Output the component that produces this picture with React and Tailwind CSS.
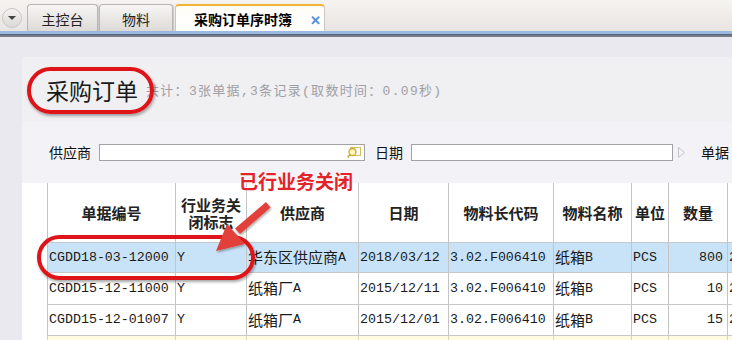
import React from "react";

const CJK = /[\u3000-\u9fff\uff00-\uffef]/;

function Mixed({ text }) {
  const parts = [];
  let cur = "";
  let curCjk = null;
  for (const ch of text) {
    const c = CJK.test(ch);
    if (curCjk === null || c === curCjk) {
      cur += ch;
      curCjk = c;
    } else {
      parts.push([cur, curCjk]);
      cur = ch;
      curCjk = c;
    }
  }
  if (cur) parts.push([cur, curCjk]);
  return (
    <>
      {parts.map(([t, c], i) =>
        c ? (
          <span key={i} className="text-[15px] font-['Noto_Sans_CJK_SC',sans-serif]">
            {t}
          </span>
        ) : (
          <span key={i} className="text-[13.3px] font-['Liberation_Mono',monospace]">
            {t}
          </span>
        )
      )}
    </>
  );
}

const cols = [
  { w: "w-[128px]", h: "单据编号" },
  { w: "w-[71px]", h: "行业务关闭标志" },
  { w: "w-[112px]", h: "供应商" },
  { w: "w-[90px]", h: "日期" },
  { w: "w-[105px]", h: "物料长代码" },
  { w: "w-[78px]", h: "物料名称" },
  { w: "w-[37px]", h: "单位" },
  { w: "w-[59px]", h: "数量" },
  { w: "w-[40px]", h: "" },
];

const rows = [
  { h: "h-[30px]", bg: "bg-[#c8e3f8]", d: ["CGDD18-03-12000", "Y", "华东区供应商A", "2018/03/12", "3.02.F006410", "纸箱B", "PCS", "800", "2"] },
  { h: "h-[32px]", bg: "bg-white", d: ["CGDD15-12-11000", "Y", "纸箱厂A", "2015/12/11", "3.02.F006410", "纸箱B", "PCS", "10", "2"] },
  { h: "h-[31px]", bg: "bg-white", d: ["CGDD15-12-01007", "Y", "纸箱厂A", "2015/12/01", "3.02.F006410", "纸箱B", "PCS", "15", "2"] },
];

function Tab({ w, children }) {
  return (
    <div
      className={`${w} h-[27px] rounded-t-[4px] border border-b-0 border-[#b9b6b2] bg-gradient-to-b from-[#f7f6f4] to-[#dddad7] flex items-center justify-center pt-[3px] text-[14px] text-[#222] shadow-[1px_0_1px_rgba(0,0,0,0.15)]`}
    >
      {children}
    </div>
  );
}

export default function App() {
  return (
    <div className="relative w-[732px] h-[340px] overflow-hidden bg-[#e9e9ef] font-['Noto_Sans_CJK_SC',sans-serif]">
      {/* tab bar */}
      <div className="h-[31px] flex items-end pl-[2px] bg-gradient-to-b from-[#f6f4f1] to-[#e7e4e2]">
        <div className="self-center mt-[4px] w-[20px] h-[20px] rounded-full border border-[#c9c6c3] bg-gradient-to-b from-[#f4f3f2] to-[#dcdad8] flex items-center justify-center">
          <svg width="10" height="6" viewBox="0 0 10 6">
            <path d="M1 1 L9 1 L5 5 Z" fill="#444" />
          </svg>
        </div>
        <div className="ml-[5px]">
          <Tab w="w-[71px]">主控台</Tab>
        </div>
        <div className="ml-[1px]">
          <Tab w="w-[74px]">物料</Tab>
        </div>
        <div className="ml-[2px] w-[150px] h-[27px] rounded-t-[4px] border border-b-0 border-[#c9c6c3] border-t-2 border-t-[#f2b436] bg-gradient-to-b from-[#fffdf6] to-white flex items-center pl-[18px] pt-[2px]">
          <span className="text-[14px] font-bold text-black">采购订单序时簿</span>
          <span className="ml-[18px] text-[#4f8fe0] text-[13px] font-bold leading-none">✕</span>
        </div>
      </div>
      <div className="h-[2.5px] bg-[#9bb8e2]" />
      <div className="h-[1.5px] bg-[#55657e]" />
      <div className="h-[1.5px] bg-[#767c88]" />

      {/* body */}
      <div className="flex">
        <div className="w-[22px] shrink-0" />
        <div className="flex-1 pt-[20.5px]">
          {/* header */}
          <div className="h-[65px] bg-[#f0eff1] flex items-end pl-[24px] pb-[18px]">
            <span className="text-[23px] leading-[28px] text-[#1a1a1a]">采购订单</span>
            <span className="ml-[8px] mb-[3px] text-[13px] tracking-[1.3px] text-[#a0a0a4] font-['Liberation_Mono','Noto_Sans_CJK_SC',monospace]">
              共计：3张单据,3条记录(取数时间：0.09秒)
            </span>
          </div>
          {/* filter */}
          <div className="h-[61px] bg-[#f3f3f7] flex items-start pt-[22px] pl-[27px] text-[14px] text-[#111]">
            <span className="leading-[17px]">供应商</span>
            <div className="ml-[8px] w-[266px] h-[17px] border border-[#a3a3a3] bg-white flex justify-end items-center pr-[3px]">
              <svg width="14" height="13" viewBox="0 0 14 13">
                <rect x="3.5" y="1.5" width="10" height="8" fill="none" stroke="#d8c060" />
                <circle cx="5.5" cy="6" r="3.5" fill="#fff6c0" stroke="#c8a830" strokeWidth="1.3" />
                <path d="M3 8.5 L0.8 11.5" stroke="#c8a830" strokeWidth="1.6" />
              </svg>
            </div>
            <span className="ml-[10px] leading-[17px]">日期</span>
            <div className="ml-[8px] w-[262px] h-[17px] border border-[#a3a3a3] bg-white" />
            <svg className="ml-[5px] mt-[3px]" width="7" height="11" viewBox="0 0 7 11">
              <path d="M0.5 0.5 L6.5 5.5 L0.5 10.5 Z" fill="none" stroke="#c4c4c8" />
            </svg>
            <span className="ml-[16px] leading-[17px]">单据</span>
          </div>
          {/* table */}
          <div className="bg-white pl-[25px] h-[200px]">
            <div className="flex h-[60px] border-b border-[#c8c8c8]">
              {cols.map((c, i) => (
                <div
                  key={i}
                  className={`${c.w} shrink-0 border-l border-[#c4c4c4] flex items-center justify-center text-center text-[15px] leading-[17px] font-bold text-[#222] px-[1px]`}
                >
                  {c.h}
                </div>
              ))}
            </div>
            {rows.map((r, ri) => (
              <div key={ri} className={`flex ${r.h} ${r.bg} border-b border-[#c8c8c8]`}>
                {r.d.map((v, i) => (
                  <div
                    key={i}
                    className={`${cols[i].w} shrink-0 border-l border-[#c4c4c4] flex items-center whitespace-nowrap overflow-hidden text-[#1a1a1a] ${
                      i === 7 ? "justify-end pr-[4px]" : "pl-[1px]"
                    }`}
                  >
                    <Mixed text={v} />
                  </div>
                ))}
              </div>
            ))}
            <div className="flex h-[10px] bg-[#fffbe0]">
              {cols.map((c, i) => (
                <div key={i} className={`${c.w} shrink-0 border-l border-[#d8d4b8]`} />
              ))}
            </div>
          </div>
        </div>
      </div>

      {/* annotations */}
      <div className="absolute left-[27px] top-[67px] w-[127px] h-[47px] rounded-[24px] border-[4px] border-[#df1419] shadow-[1px_2px_3px_rgba(0,0,0,0.35)]" />
      <div className="absolute left-[37px] top-[235px] w-[218px] h-[45px] rounded-[23px] border-[4px] border-[#df1419] shadow-[1px_2px_3px_rgba(0,0,0,0.35)]" />
      <div className="absolute left-[239px] top-[169px] text-[19px] leading-[24px] font-bold text-[#e3232a] font-['Noto_Sans_CJK_SC',sans-serif] [text-shadow:0_0_2px_#fff,0_0_2px_#fff]">
        已行业务关闭
      </div>
      <svg className="absolute left-[205px] top-[195px]" width="75" height="65" viewBox="205 195 75 65">
        <defs>
          <filter id="sh" x="-20%" y="-20%" width="140%" height="140%">
            <feDropShadow dx="1" dy="1.5" stdDeviation="1" floodColor="#000" floodOpacity="0.35" />
          </filter>
        </defs>
        <g filter="url(#sh)">
          <path d="M266 202 L270.5 207.5 L240 234 L235 228.5 Z" fill="#e2403a" />
          <path d="M216 251 L227 224 L245 244 Z" fill="#e2403a" />
        </g>
      </svg>
    </div>
  );
}
